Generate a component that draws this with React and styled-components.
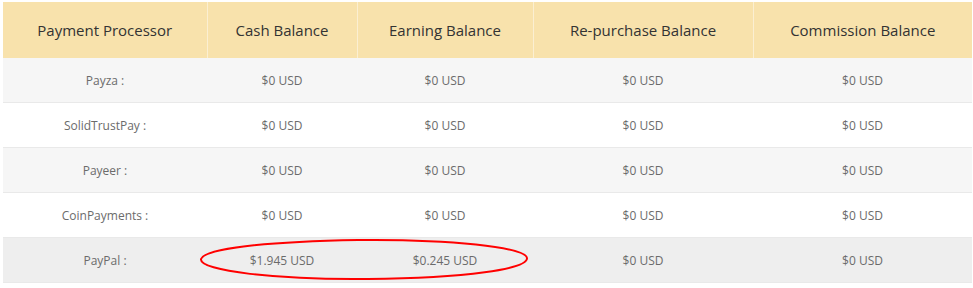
import React from "react";
import styled, { createGlobalStyle } from "styled-components";

const Global = createGlobalStyle`
  html, body { margin: 0; padding: 0; background: #fff; }
  body { font-family: "Open Sans", "Liberation Sans", sans-serif; }
`;

const Page = styled.div`
  padding: 2px 2px 0 3px;
`;

const Wrap = styled.div`
  position: relative;
  width: 969px;
`;

const Table = styled.table`
  width: 969px;
  border-collapse: collapse;
  table-layout: fixed;
`;

const Th = styled.th`
  width: ${(p) => p.$w}px;
  height: 56px;
  padding: 0 0 1px;
  background: #f8e2ac;
  color: #333;
  font-size: 15px;
  font-weight: 400;
  text-align: center;
  vertical-align: middle;
  border-right: 1px solid #fbefd2;
  box-sizing: border-box;
  &:last-child { border-right: none; }
`;

const Tr = styled.tr`
  background: ${(p) => p.$bg};
  border-bottom: 1px solid #e9e9e9;
`;

const Td = styled.td`
  height: 44px;
  padding: 0;
  color: #6b6b6b;
  font-size: 12px;
  text-align: center;
  vertical-align: middle;
`;

const Ellipse = styled.svg`
  position: absolute;
  left: 195px;
  top: 235px;
  pointer-events: none;
`;

const cols = [
  ["Payment Processor", 204],
  ["Cash Balance", 150],
  ["Earning Balance", 176],
  ["Re-purchase Balance", 220],
  ["Commission Balance", 219],
];

const rows = [
  ["Payza :", "$0 USD", "$0 USD", "$0 USD", "$0 USD"],
  ["SolidTrustPay :", "$0 USD", "$0 USD", "$0 USD", "$0 USD"],
  ["Payeer :", "$0 USD", "$0 USD", "$0 USD", "$0 USD"],
  ["CoinPayments :", "$0 USD", "$0 USD", "$0 USD", "$0 USD"],
  ["PayPal :", "$1.945 USD", "$0.245 USD", "$0 USD", "$0 USD"],
];

const bgs = ["#f6f6f6", "#ffffff", "#f6f6f6", "#ffffff", "#eeeeee"];

export default function App() {
  return (
    <Page>
      <Global />
      <Wrap>
        <Table>
          <thead>
            <tr>
              {cols.map(([t, w]) => (
                <Th key={t} $w={w}>{t}</Th>
              ))}
            </tr>
          </thead>
          <tbody>
            {rows.map((r, i) => (
              <Tr key={i} $bg={bgs[i]}>
                {r.map((c, j) => (
                  <Td key={j}>{c}</Td>
                ))}
              </Tr>
            ))}
          </tbody>
        </Table>
        <Ellipse width="336" height="48" viewBox="0 0 336 48">
          <path
            d="M3 22 C 7 12, 60 5, 160 3 C 250 2, 328 10, 329 21 C 330 32, 268 41, 170 42 C 80 43, 1 34, 3 22 Z"
            fill="none"
            stroke="#f00"
            strokeWidth="2"
          />
        </Ellipse>
      </Wrap>
    </Page>
  );
}
